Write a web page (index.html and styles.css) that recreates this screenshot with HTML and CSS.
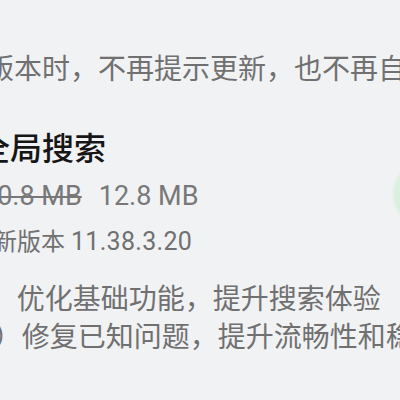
FILE: index.html
```html
<!DOCTYPE html>
<html lang="zh-CN">
<head>
<meta charset="utf-8">
<link rel="stylesheet" href="styles.css">
</head>
<body>
<div class="page">
  <p class="notice">忽略此版本时，不再提示更新，也不再自动更新</p>
  <div class="app">
    <div class="info">
      <div class="title">全局搜索</div>
      <div class="size"><span class="old">10.8 MB</span><span class="new">12.8 MB</span></div>
      <div class="version">新版本 <span class="vnum">11.38.3.20</span></div>
    </div>
    <div class="btn"></div>
  </div>
  <div class="changes">
    <div class="item item-first"><span class="num">1）</span>优化基础功能，提升搜索体验</div>
    <div class="item"><span class="num">2）</span>修复已知问题，提升流畅性和稳定性</div>
  </div>
</div>
</body>
</html>
```
FILE: styles.css
```css
html, body {
  margin: 0;
  padding: 0;
}
body {
  width: 400px;
  height: 400px;
  overflow: hidden;
  background: #f1f2f4;
  font-family: Roboto, "Noto Sans CJK SC", sans-serif;
}
.page {
  padding-top: 50px;
}
.notice {
  margin: 0 0 0 -98px;
  font-size: 28px;
  line-height: 40px;
  color: #707070;
  white-space: nowrap;
}
.app {
  display: flex;
  align-items: center;
  justify-content: space-between;
  width: 457px;
  margin-top: 37px;
}
.info {
  display: flex;
  flex-direction: column;
}
.title {
  margin-left: -22px;
  font-size: 32px;
  line-height: 44px;
  font-weight: 500;
  color: #161616;
  white-space: nowrap;
}
.size {
  margin: 7px 0 0 -18px;
  font-size: 27px;
  line-height: 36px;
  color: #787878;
  white-space: nowrap;
}
.old {
  text-decoration: line-through;
  text-decoration-thickness: 2px;
  margin-right: 17px;
}
.version {
  margin: 10px 0 0 -7px;
  font-size: 24px;
  line-height: 36px;
  color: #707070;
  white-space: nowrap;
}
.vnum {
  font-size: 25px;
  letter-spacing: 0.3px;
}
.btn {
  width: 64px;
  height: 64px;
  border-radius: 50%;
  background: #d9f0de;
  filter: blur(1px);
}
.changes {
  margin-top: 21px;
  margin-left: -22px;
  font-size: 28px;
  line-height: 38px;
  color: #707070;
}
.item {
  white-space: nowrap;
}
.item-first {
  margin-left: -5px;
}
.num {
  display: inline-block;
}
```
